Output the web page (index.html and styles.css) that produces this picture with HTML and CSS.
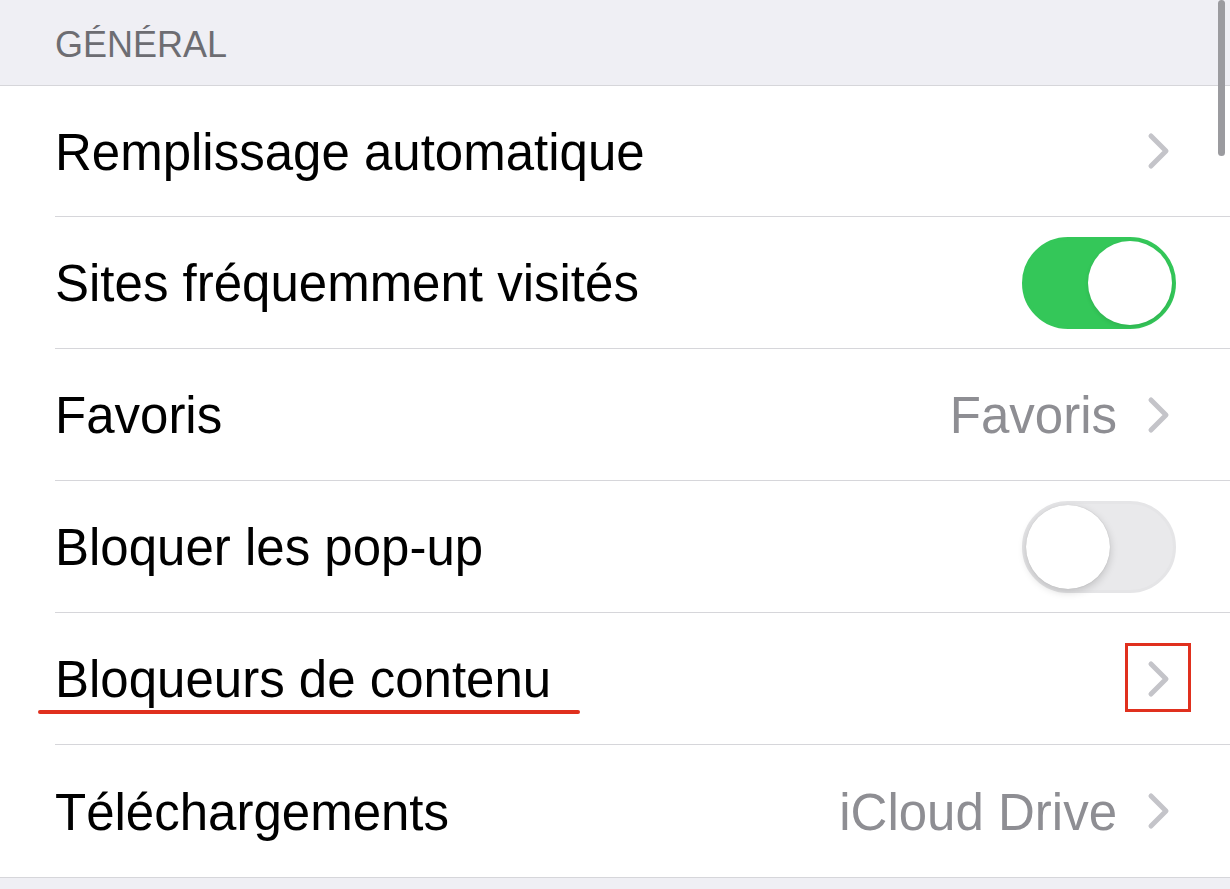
FILE: index.html
```html
<!DOCTYPE html>
<html lang="fr">
<head>
    <meta charset="UTF-8">
    <title>Réglages - Safari</title>
    <link rel="stylesheet" href="styles.css">
</head>
<body>
    <div class="scroll-thumb"></div>
    <div class="section-header">GÉNÉRAL</div>
    <ul class="group">
        <li class="row">
            <span class="label">Remplissage automatique</span>
            <span class="accessory">
                <svg class="chevron" viewBox="0 0 24 38"><path d="M4 4 L19 19 L4 34"/></svg>
            </span>
        </li>
        <li class="row">
            <span class="label">Sites fréquemment visités</span>
            <span class="switch on"><span class="knob"></span></span>
        </li>
        <li class="row">
            <span class="label">Favoris</span>
            <span class="accessory">
                <span class="value">Favoris</span>
                <svg class="chevron" viewBox="0 0 24 38"><path d="M4 4 L19 19 L4 34"/></svg>
            </span>
        </li>
        <li class="row">
            <span class="label">Bloquer les pop-up</span>
            <span class="switch"><span class="knob"></span></span>
        </li>
        <li class="row">
            <span class="label">Bloqueurs de contenu</span>
            <span class="mark-line"></span>
            <span class="accessory">
                <span class="mark-box"></span>
                <svg class="chevron" viewBox="0 0 24 38"><path d="M4 4 L19 19 L4 34"/></svg>
            </span>
        </li>
        <li class="row">
            <span class="label">Téléchargements</span>
            <span class="accessory">
                <span class="value">iCloud Drive</span>
                <svg class="chevron" viewBox="0 0 24 38"><path d="M4 4 L19 19 L4 34"/></svg>
            </span>
        </li>
    </ul>
</body>
</html>
```

FILE: styles.css
```css
:root {
    --bg: #efeff4;
    --sep: #d6d6da;
    --text: #000;
    --grey-text: #6d6d72;
    --value: #8e8e93;
    --chevron: #c4c4c9;
    --green: #34c759;
    --red: #e0301e;
}
* { box-sizing: border-box; }
body {
    margin: 0;
    background: var(--bg);
    font-family: "Liberation Sans", Arial, sans-serif;
    color: var(--text);
    height: 889px;
    overflow: hidden;
    position: relative;
}
.section-header {
    height: 86px;
    padding: 24px 0 0 55px;
    font-size: 36px;
    color: var(--grey-text);
    border-bottom: 1px solid var(--sep);
}
.group {
    list-style: none;
    margin: 0;
    padding: 0;
    background: #fff;
    border-bottom: 1px solid var(--sep);
}
.row {
    position: relative;
    display: flex;
    align-items: center;
    justify-content: space-between;
    height: 132px;
    margin-left: 55px;
    padding-right: 54px;
    border-bottom: 1px solid var(--sep);
}
.row:first-child {
    height: 131px;
}
.row:last-child {
    border-bottom: none;
}
.label {
    font-size: 51px;
    padding-top: 2px;
}
.accessory {
    position: relative;
    display: flex;
    align-items: center;
    gap: 30px;
}
.value {
    font-size: 51px;
    color: var(--value);
    padding-top: 2px;
}
.chevron {
    width: 24px;
    height: 38px;
    margin-right: 5px;
}
.chevron path {
    fill: none;
    stroke: var(--chevron);
    stroke-width: 5;
    stroke-linecap: round;
    stroke-linejoin: round;
}
.switch {
    position: relative;
    width: 154px;
    height: 92px;
    border-radius: 46px;
    background: #e9e9eb;
    border: 3px solid #e5e5e7;
}
.switch .knob {
    position: absolute;
    top: 1px;
    left: 1px;
    width: 84px;
    height: 84px;
    border-radius: 50%;
    background: #fff;
    box-shadow: 0 3px 8px rgba(0,0,0,0.18), 0 0 1px rgba(0,0,0,0.2);
}
.switch.on {
    background: var(--green);
    border-color: var(--green);
}
.switch.on .knob {
    left: auto;
    right: 1px;
    box-shadow: 0 2px 4px rgba(0,0,0,0.1);
}
.mark-line {
    position: absolute;
    left: -17px;
    top: 97px;
    width: 542px;
    height: 4px;
    border-radius: 2px;
    background: var(--red);
}
.mark-box {
    position: absolute;
    right: -15px;
    top: -17px;
    width: 66px;
    height: 69px;
    border: 3px solid var(--red);
}
.scroll-thumb {
    position: absolute;
    top: 0;
    right: 5px;
    width: 7px;
    height: 156px;
    border-radius: 4px;
    background: #9b9b9f;
    z-index: 2;
}
```
